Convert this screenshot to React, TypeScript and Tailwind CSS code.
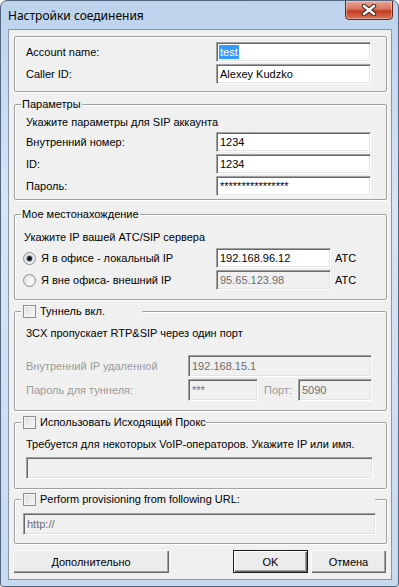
import type { ReactNode } from "react";

const sunken =
  "border border-t-[#a0a0a0] border-l-[#a0a0a0] border-r-white border-b-white shadow-[inset_1px_1px_0_#696969,inset_-1px_-1px_0_#e3e3e3]";

function Field({
  value,
  width,
  height = "h-[20px]",
  disabled,
  selected,
}: {
  value: string;
  width: string;
  height?: string;
  disabled?: boolean;
  selected?: boolean;
}) {
  return (
    <div
      className={`${width} ${height} ${sunken} ${
        disabled ? "bg-[#f0f0f0] text-[#6d6d6d]" : "bg-white text-black"
      } flex items-center pl-[2px] overflow-hidden whitespace-nowrap`}
    >
      {selected ? <span className="bg-[#3399ff] text-white px-[1px]">{value}</span> : <span className="pl-[1px]">{value}</span>}
    </div>
  );
}

function Group({
  height,
  className = "",
  legend,
  children,
}: {
  height: string;
  className?: string;
  legend?: ReactNode;
  children: ReactNode;
}) {
  return (
    <div
      className={`relative ml-[5px] w-[373px] ${height} ${className} rounded-[2px] border border-[#a0a0a0] shadow-[inset_1px_1px_0_#fff,1px_1px_0_#fff]`}
    >
      {legend}
      {children}
    </div>
  );
}

function Legend({ children, width }: { children: ReactNode; width?: string }) {
  return (
    <div
      className={`absolute left-[6px] -top-[8px] h-[14px] bg-[#f0f0f0] px-[1px] flex items-center whitespace-nowrap overflow-hidden ${width ?? ""}`}
    >
      {children}
    </div>
  );
}

function CheckBox() {
  return (
    <span className="inline-block w-[13px] h-[13px] border border-[#8e8f8f] bg-[linear-gradient(135deg,#dcdcdc,#fbfbfb)] shadow-[inset_0_0_0_1px_#f4f4f4] shrink-0" />
  );
}

function Radio({ checked }: { checked?: boolean }) {
  return (
    <span className="w-[13px] h-[13px] rounded-full border border-[#8e8f8f] bg-[radial-gradient(circle_at_60%_60%,#fff,#d8d8d8)] flex items-center justify-center shrink-0">
      {checked && <span className="w-[5px] h-[5px] rounded-full bg-[#1b1b1b] shadow-[0_0_1px_1px_#9db7d4]" />}
    </span>
  );
}

function Button({ label, width, isDefault }: { label: string; width: string; isDefault?: boolean }) {
  return (
    <div
      className={`${width} h-[23px] flex items-center justify-center bg-[#ececec] ${
        isDefault
          ? "border border-[#1a1a1a] shadow-[inset_1px_1px_0_#fff,inset_-1px_-1px_0_#696969,inset_-2px_-2px_0_#a0a0a0]"
          : "shadow-[inset_1px_1px_0_#fff,inset_-1px_-1px_0_#696969,inset_-2px_-2px_0_#a0a0a0]"
      }`}
    >
      {label}
    </div>
  );
}

export default function App() {
  return (
    <div className="w-[399px] h-[587px] rounded-t-[7px] rounded-b-[3px] border border-[#52677f] bg-[linear-gradient(180deg,#bdd3ec_0%,#d6e5f5_35%,#c8daee_100%)] font-['Liberation_Sans',sans-serif] text-[11px] leading-[14px] text-black overflow-hidden">
      {/* Title bar */}
      <div className="relative h-[28px] flex items-center pl-[7px]">
        <span className="font-['Noto_Sans',sans-serif] text-[12px] text-black pt-[2px]">Настройки соединения</span>
        <div className="absolute right-[5px] -top-[1px] w-[48px] h-[20px] rounded-b-[4px] border border-[#6b2417] bg-[linear-gradient(180deg,#e8a797_0%,#d8755c_45%,#c23b1f_55%,#d9765a_100%)] shadow-[inset_0_0_0_1px_rgba(255,255,255,0.35)] flex items-center justify-center">
          <svg width="16" height="12" viewBox="0 0 16 12">
            <path d="M3 2 L13 10 M13 2 L3 10" stroke="#3b1b14" strokeWidth="4.5" strokeLinecap="round" />
            <path d="M3 2 L13 10 M13 2 L3 10" stroke="#fff" strokeWidth="2.6" strokeLinecap="round" />
          </svg>
        </div>
      </div>

      {/* Client area */}
      <div className="ml-[7px] w-[384px] h-[551px] border border-[#8798ab] bg-[#f0f0f0] flex flex-col">
        {/* Account */}
        <Group height="h-[56px]" className="mt-[6px]">
          <div className="pt-[5px] pl-[11px] pr-[15px] flex flex-col gap-[2px]">
            <div className="flex items-center justify-between h-[20px]">
              <span>Account name:</span>
              <Field value="test" width="w-[155px]" selected />
            </div>
            <div className="flex items-center justify-between h-[20px]">
              <span>Caller ID:</span>
              <Field value="Alexey Kudzko" width="w-[155px]" />
            </div>
          </div>
        </Group>

        {/* Параметры */}
        <Group height="h-[96px]" className="mt-[12px]" legend={<Legend>Параметры</Legend>}>
          <div className="pt-[8px] pl-[11px] pr-[15px] flex flex-col">
            <div className="h-[18px] flex items-center">Укажите параметры для SIP аккаунта</div>
            <div className="mt-[1px] flex flex-col gap-[2px]">
              <div className="flex items-center justify-between h-[20px]">
                <span>Внутренний номер:</span>
                <Field value="1234" width="w-[155px]" />
              </div>
              <div className="flex items-center justify-between h-[20px]">
                <span>ID:</span>
                <Field value="1234" width="w-[155px]" />
              </div>
              <div className="flex items-center justify-between h-[20px]">
                <span>Пароль:</span>
                <Field value="****************" width="w-[155px]" />
              </div>
            </div>
          </div>
        </Group>

        {/* Мое местонахождение */}
        <Group height="h-[86px]" className="mt-[14px]" legend={<Legend>Мое местонахождение</Legend>}>
          <div className="pt-[13px] pl-[9px] flex flex-col">
            <div className="h-[18px] flex items-center">Укажите IP вашей АТС/SIP сервера</div>
            <div className="mt-[2px] flex flex-col gap-[2px] pl-[-1px]">
              <div className="flex items-center h-[20px] -ml-[1px]">
                <div className="w-[193px] flex items-center gap-[5px]">
                  <Radio checked />
                  <span>Я в офисе - локальный IP</span>
                </div>
                <Field value="192.168.96.12" width="w-[115px]" />
                <span className="ml-[4px]">АТС</span>
              </div>
              <div className="flex items-center h-[20px] -ml-[1px]">
                <div className="w-[193px] flex items-center gap-[5px]">
                  <Radio />
                  <span>Я вне офиса- внешний IP</span>
                </div>
                <Field value="95.65.123.98" width="w-[115px]" disabled />
                <span className="ml-[4px]">АТС</span>
              </div>
            </div>
          </div>
        </Group>

        {/* Туннель */}
        <Group
          height="h-[100px]"
          className="mt-[11px]"
          legend={
            <Legend width="w-[121px]">
              <span className="ml-[1px] flex items-center gap-[4px]">
                <CheckBox />
                <span>Туннель вкл.</span>
              </span>
            </Legend>
          }
        >
          <div className="pt-[12px] pl-[11px] flex flex-col">
            <div className="h-[18px] flex items-center">3CX пропускает RTP&amp;SIP через один порт</div>
            <div className="mt-[13px] flex flex-col gap-[2px]">
              <div className="flex items-center h-[22px]">
                <span className="w-[162px] text-[#9a9a9a]">Внутренний IP удаленной</span>
                <Field value="192.168.15.1" width="w-[184px]" height="h-[22px]" disabled />
              </div>
              <div className="flex items-center h-[22px]">
                <span className="w-[162px] text-[#9a9a9a]">Пароль для туннеля:</span>
                <Field value="***" width="w-[70px]" height="h-[22px]" disabled />
                <span className="ml-[6px] w-[34px] text-[#9a9a9a]">Порт:</span>
                <Field value="5090" width="w-[74px]" height="h-[22px]" disabled />
              </div>
            </div>
          </div>
        </Group>

        {/* Прокси */}
        <Group
          height="h-[67px]"
          className="mt-[11px]"
          legend={
            <Legend width="w-[185px]">
              <span className="ml-[1px] flex items-center gap-[4px]">
                <CheckBox />
                <span>Использовать Исходящий Прокси</span>
              </span>
            </Legend>
          }
        >
          <div className="pt-[12px] pl-[11px] flex flex-col">
            <div className="h-[18px] flex items-center">Требуется для некоторых VoIP-операторов. Укажите IP или имя.</div>
            <div className="mt-[4px]">
              <Field value="" width="w-[347px]" height="h-[22px]" disabled />
            </div>
          </div>
        </Group>

        {/* Provisioning */}
        <Group
          height="h-[45px]"
          className="mt-[10px]"
          legend={
            <Legend width="w-[354px]">
              <span className="ml-[1px] flex items-center gap-[4px]">
                <CheckBox />
                <span>Perform provisioning from following URL:</span>
              </span>
            </Legend>
          }
        >
          <div className="pt-[13px] pl-[8px]">
            <Field value="http://" width="w-[353px]" height="h-[22px]" disabled />
          </div>
        </Group>

        {/* Buttons */}
        <div className="mt-[6px] ml-[4px] flex items-center">
          <Button label="Дополнительно" width="w-[156px]" />
          <div className="ml-[64px] flex gap-[3px]">
            <Button label="OK" width="w-[75px]" isDefault />
            <Button label="Отмена" width="w-[75px]" />
          </div>
        </div>
      </div>
    </div>
  );
}
